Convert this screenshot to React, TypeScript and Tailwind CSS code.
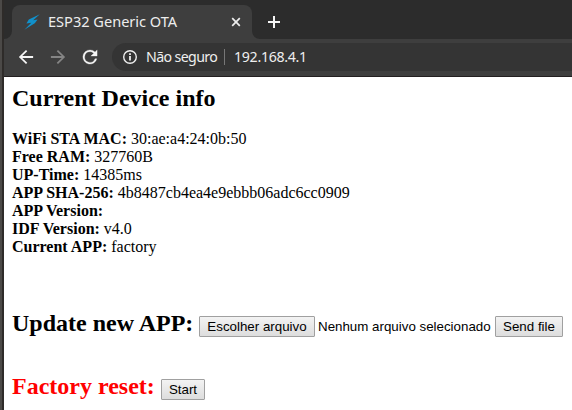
import type { ReactNode } from "react";

const info = [
  ["WiFi STA MAC:", "30:ae:a4:24:0b:50"],
  ["Free RAM:", "327760B"],
  ["UP-Time:", "14385ms"],
  ["APP SHA-256:", "4b8487cb4ea4e9ebbb06adc6cc0909"],
  ["APP Version:", ""],
  ["IDF Version:", "v4.0"],
  ["Current APP:", "factory"],
];

function NativeButton({ children, className }: { children: ReactNode; className: string }) {
  return (
    <button
      className={`mt-1.5 h-[21px] shrink-0 rounded-[1px] border border-[#a0a0a0] bg-linear-to-b from-[#f3f3f3] to-[#dddddd] text-center font-['Liberation_Sans',sans-serif] text-[13.333px] leading-[19px] font-normal whitespace-nowrap text-black ${className}`}
    >
      {children}
    </button>
  );
}

function TabStrip() {
  return (
    <div className="flex h-[39px] items-end bg-[#2c2c2c]">
      <svg className="h-2 w-2 shrink-0" viewBox="0 0 8 8">
        <path d="M8 0v8H0a8 8 0 0 0 8-8Z" fill="#3e3e3e" />
      </svg>
      <div className="flex h-[34px] w-[240px] shrink-0 items-center rounded-t-lg bg-[#3e3e3e] pl-3">
        <svg className="h-4 w-4 shrink-0" viewBox="0 0 16 16">
          <path d="M15.8.2 4.8 5.6 2.4 9.6l4.9-.9L.4 15.8 10.8 9.2 13.6 5.4 9.2 6.3Z" fill="#1190ca" />
        </svg>
        <span className="ml-2 w-[180px] pb-0.5 font-['Noto_Sans',sans-serif] text-[14.6px] leading-5 tracking-[-0.02px] whitespace-nowrap text-[#ededed]">
          ESP32 Generic OTA
        </span>
        <svg className="h-4 w-4 shrink-0" viewBox="0 0 16 16" stroke="#eeeeee" strokeWidth="1.7">
          <path d="m4.2 4.2 7.6 7.6M11.8 4.2l-7.6 7.6" />
        </svg>
      </div>
      <svg className="h-2 w-2 shrink-0" viewBox="0 0 8 8">
        <path d="M0 0v8h8a8 8 0 0 1-8-8Z" fill="#3e3e3e" />
      </svg>
      <svg className="mb-[9px] ml-1.5 h-4 w-4 shrink-0" viewBox="0 0 16 16" stroke="#f5f5f5" strokeWidth="2">
        <path d="M8 2v12M2 8h12" />
      </svg>
    </div>
  );
}

function Toolbar() {
  return (
    <div className="flex h-[38px] items-start border-b border-[#231f20] bg-[#3e3e3e] pt-1 pl-[14px]">
      <svg className="mt-1.5 h-4 w-4 shrink-0" viewBox="3 3 18 18" fill="#f5f5f5">
        <path d="M20 11H7.83l5.59-5.59L12 4l-8 8 8 8 1.41-1.41L7.83 13H20v-2z" />
      </svg>
      <svg className="mt-1.5 ml-4 h-4 w-4 shrink-0" viewBox="3 3 18 18" fill="#858585">
        <path d="m12 4-1.41 1.41L16.17 11H4v2h12.17l-5.58 5.59L12 20l8-8z" />
      </svg>
      <svg className="mt-1.5 ml-4 h-4 w-4 shrink-0" viewBox="3 3 18 18" fill="#f5f5f5">
        <path
          d="M17.65 6.35A7.96 7.96 0 0 0 12 4a8 8 0 1 0 7.73 10h-2.08A6 6 0 1 1 12 6c1.66 0 3.14.69 4.22 1.78L13 11h7V4l-2.35 2.35z"
          stroke="#f5f5f5"
          strokeWidth=".3"
        />
      </svg>
      <div className="ml-[14px] flex h-7 flex-1 items-center overflow-hidden rounded-l-[14px] bg-[#343434] pl-[10px] font-['Noto_Sans',sans-serif] text-[14.2px] leading-5 whitespace-nowrap text-[#eeeeee]">
        <svg className="h-4 w-4 shrink-0" viewBox="0 0 16 16" fill="none" stroke="#eeeeee">
          <circle cx="8" cy="8" r="6.3" strokeWidth="1.4" />
          <path d="M8 7v4.5M8 4.3v1.7" strokeWidth="1.8" />
        </svg>
        <span className="ml-2 w-[78px] shrink-0 tracking-[-0.62px]">Não seguro</span>
        <span className="h-4 w-px shrink-0 bg-[#777777]" />
        <span className="ml-[9px] tracking-[-0.31px]">192.168.4.1</span>
      </div>
    </div>
  );
}

export default function App() {
  return (
    <div className="flex h-[410px] w-[572px] overflow-hidden bg-white">
      <div className="w-1 shrink-0 border-r-2 border-[#2e2b29] bg-[#4b4947]" />
      <div className="min-w-0 flex-1">
        <TabStrip />
        <Toolbar />
        <main className="pt-2 pl-2 font-['Liberation_Serif',serif] text-base leading-[18px] text-black">
          <h2 className="text-2xl leading-[27px] font-bold">Current Device info</h2>
          <div className="mt-[18px]">
            {info.map(([label, value]) => (
              <div key={label} className="h-[18px] whitespace-nowrap">
                <b>{label}</b> {value}
              </div>
            ))}
          </div>
          <div className="mt-[54px] flex h-[27px] items-start whitespace-nowrap">
            <h2 className="w-[187px] shrink-0 text-2xl leading-[27px] font-bold">Update new APP:</h2>
            <NativeButton className="w-[116px]">Escolher arquivo</NativeButton>
            <span className="mt-1.5 ml-[3px] w-[177px] shrink-0 font-['Liberation_Sans',sans-serif] text-[13.333px] leading-[21px]">
              Nenhum arquivo selecionado
            </span>
            <NativeButton className="w-[68px]">Send file</NativeButton>
          </div>
          <div className="mt-9 flex h-[27px] items-start whitespace-nowrap">
            <h2 className="w-[149px] shrink-0 text-2xl leading-[27px] font-bold text-[#ff0000]">Factory reset:</h2>
            <NativeButton className="w-[44px]">Start</NativeButton>
          </div>
        </main>
      </div>
    </div>
  );
}
